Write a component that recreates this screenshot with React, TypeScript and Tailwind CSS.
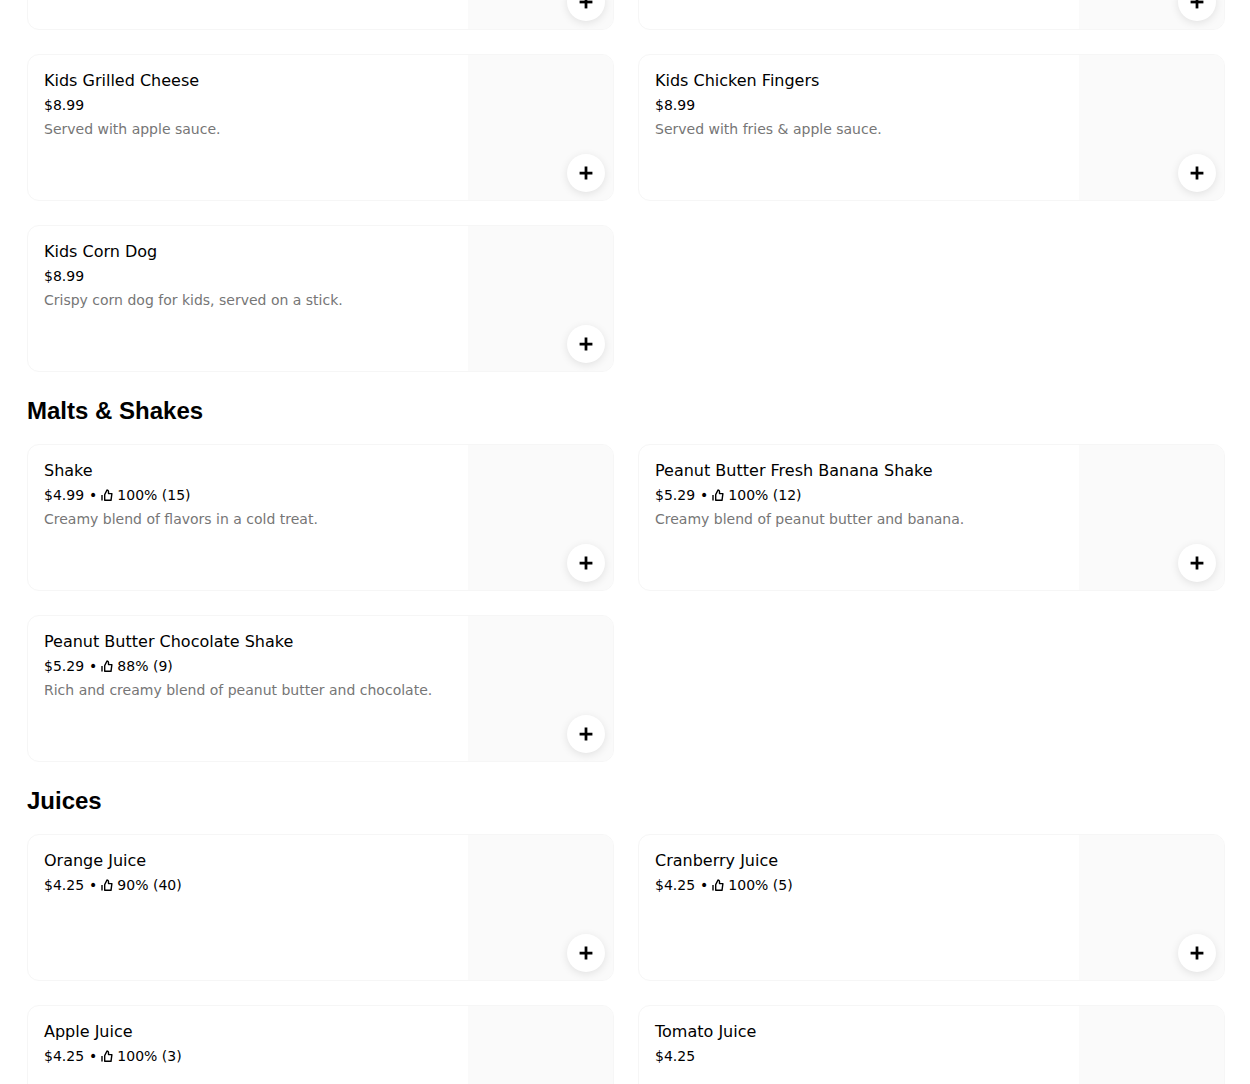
import { Plus } from 'lucide-react';

interface Item {
  name: string;
  price: string;
  rating?: string;
  desc?: string;
}

const topRows: Item[] = [
  { name: 'Kids Hot Dog', price: '$8.99' },
  { name: 'Kids Hamburger', price: '$8.99' },
  { name: 'Kids Grilled Cheese', price: '$8.99', desc: 'Served with apple sauce.' },
  { name: 'Kids Chicken Fingers', price: '$8.99', desc: 'Served with fries & apple sauce.' },
  { name: 'Kids Corn Dog', price: '$8.99', desc: 'Crispy corn dog for kids, served on a stick.' },
];

const shakes: Item[] = [
  { name: 'Shake', price: '$4.99', rating: '100% (15)', desc: 'Creamy blend of flavors in a cold treat.' },
  { name: 'Peanut Butter Fresh Banana Shake', price: '$5.29', rating: '100% (12)', desc: 'Creamy blend of peanut butter and banana.' },
  { name: 'Peanut Butter Chocolate Shake', price: '$5.29', rating: '88% (9)', desc: 'Rich and creamy blend of peanut butter and chocolate.' },
];

const juices: Item[] = [
  { name: 'Orange Juice', price: '$4.25', rating: '90% (40)' },
  { name: 'Cranberry Juice', price: '$4.25', rating: '100% (5)' },
  { name: 'Apple Juice', price: '$4.25', rating: '100% (3)' },
  { name: 'Tomato Juice', price: '$4.25' },
];

function ThumbIcon() {
  return (
    <svg width="12" height="12" viewBox="0 0 12 12" fill="none" stroke="currentColor" strokeWidth="1.4" className="mr-[4px] ml-px shrink-0">
      <path d="M1 6v5.5" />
      <path d="M3.7 5.6 6 1c1 .1 1.5.7 1.5 1.6V4.6h3.4l-.9 6.7H3.7z" strokeLinejoin="round" />
    </svg>
  );
}

function MenuCard({ item }: { item: Item }) {
  return (
    <div className="flex h-[147px] overflow-hidden rounded-xl border border-[#f6f6f6] bg-white">
      <div className="min-w-0 flex-1 p-4">
        <div className="text-base leading-5 text-black">{item.name}</div>
        <div className="mt-[5px] flex items-center text-sm leading-[18px] text-black">
          {item.price}
          {item.rating && (
            <>
              <span className="mr-[3px] ml-[5px]">•</span>
              <ThumbIcon />
              {item.rating}
            </>
          )}
        </div>
        {item.desc && <div className="mt-[6px] text-sm leading-[18px] text-[#767676]">{item.desc}</div>}
      </div>
      <div className="relative w-[145px] shrink-0 bg-[#fafafa]">
        <button className="absolute right-2 bottom-2 flex h-[38px] w-[38px] items-center justify-center rounded-full bg-white shadow-[0_2px_8px_rgba(0,0,0,0.1)]">
          <Plus size={22} strokeWidth={3} strokeLinecap="butt" className="text-black" />
        </button>
      </div>
    </div>
  );
}

function Grid({ items }: { items: Item[] }) {
  return (
    <div className="grid grid-cols-2 gap-6">
      {items.map((item) => (
        <MenuCard key={item.name} item={item} />
      ))}
    </div>
  );
}

function Section({ title, items }: { title: string; items: Item[] }) {
  return (
    <section className="mt-6">
      <h2 className="mb-[18px] font-['Liberation_Sans',sans-serif] text-2xl leading-[30px] font-bold text-black">{title}</h2>
      <Grid items={items} />
    </section>
  );
}

export default function App() {
  return (
    <div className="h-[1084px] overflow-hidden bg-white font-['DejaVu_Sans',sans-serif]">
      {/* page is scrolled, first row is cut off at the top */}
      <div className="mt-[-117px] pr-[25px] pl-[27px]">
        <Grid items={topRows} />
        <Section title="Malts & Shakes" items={shakes} />
        <Section title="Juices" items={juices} />
      </div>
    </div>
  );
}
